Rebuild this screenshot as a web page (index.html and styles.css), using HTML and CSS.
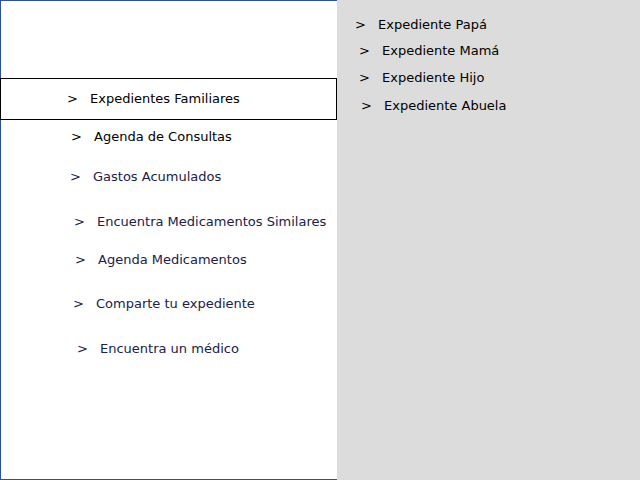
FILE: index.html
```html
<!DOCTYPE html>
<html lang="es">
<head>
<meta charset="utf-8">
<title>Expedientes</title>
<link rel="stylesheet" href="styles.css">
</head>
<body>
<div class="app">
  <nav class="side">
    <ul class="menu">
      <li class="item active i1"><span class="arrow">&gt;</span>Expedientes Familiares</li>
      <li class="item dark i2"><span class="arrow">&gt;</span>Agenda de Consultas</li>
      <li class="item i3"><span class="arrow">&gt;</span>Gastos Acumulados</li>
      <li class="item i4"><span class="arrow">&gt;</span>Encuentra Medicamentos Similares</li>
      <li class="item i5"><span class="arrow">&gt;</span>Agenda Medicamentos</li>
      <li class="item i6"><span class="arrow">&gt;</span>Comparte tu expediente</li>
      <li class="item i7"><span class="arrow">&gt;</span>Encuentra un médico</li>
    </ul>
  </nav>
  <section class="detail">
    <ul class="sub">
      <li class="sitem s1"><span class="arrow">&gt;</span>Expediente Papá</li>
      <li class="sitem s2"><span class="arrow">&gt;</span>Expediente Mamá</li>
      <li class="sitem s3"><span class="arrow">&gt;</span>Expediente Hijo</li>
      <li class="sitem s4"><span class="arrow">&gt;</span>Expediente Abuela</li>
    </ul>
  </section>
</div>
</body>
</html>
```

FILE: styles.css
```css
html, body {
  margin: 0;
  padding: 0;
  height: 100%;
}
body {
  font-family: "DejaVu Sans", sans-serif;
  font-size: 13px;
}
.app {
  display: flex;
  width: 640px;
  height: 480px;
}
.side {
  width: 337px;
  flex: none;
  height: 480px;
  box-sizing: border-box;
  border-top: 1px solid #2b52a0;
  border-left: 1px solid #2b52a0;
  border-bottom: 1px solid #2b52a0;
  background: #ffffff;
}
.detail {
  flex: 1;
  background: #dcdcdc;
}
ul {
  list-style: none;
  margin: 0;
  padding: 0;
}
.menu {
  padding-top: 77px;
  margin-left: -1px;
}
.item {
  display: flex;
  align-items: center;
  height: 16px;
  line-height: 16px;
  color: #20204a;
  white-space: nowrap;
}
.arrow {
  display: inline-block;
  width: 23px;
  flex: none;
}
.item.active {
  box-sizing: border-box;
  width: 337px;
  height: 42px;
  border: 1px solid #000000;
  color: #000000;
}
.item.dark { color: #000000; }
.i1 { padding-left: 66px; }
.i2 { padding-left: 71px; margin-top: 9px; }
.i3 { padding-left: 70px; margin-top: 24px; }
.i4 { padding-left: 74px; margin-top: 29px; }
.i5 { padding-left: 75px; margin-top: 22px; }
.i6 { padding-left: 73px; margin-top: 28px; }
.i7 { padding-left: 77px; margin-top: 29px; }

.sub {
  padding-top: 17px;
}
.sitem {
  display: flex;
  align-items: center;
  height: 16px;
  line-height: 16px;
  color: #000000;
  white-space: nowrap;
}
.s1 { padding-left: 18px; }
.s2 { padding-left: 22px; margin-top: 10px; }
.s3 { padding-left: 22px; margin-top: 11px; }
.s4 { padding-left: 24px; margin-top: 12px; }
```
